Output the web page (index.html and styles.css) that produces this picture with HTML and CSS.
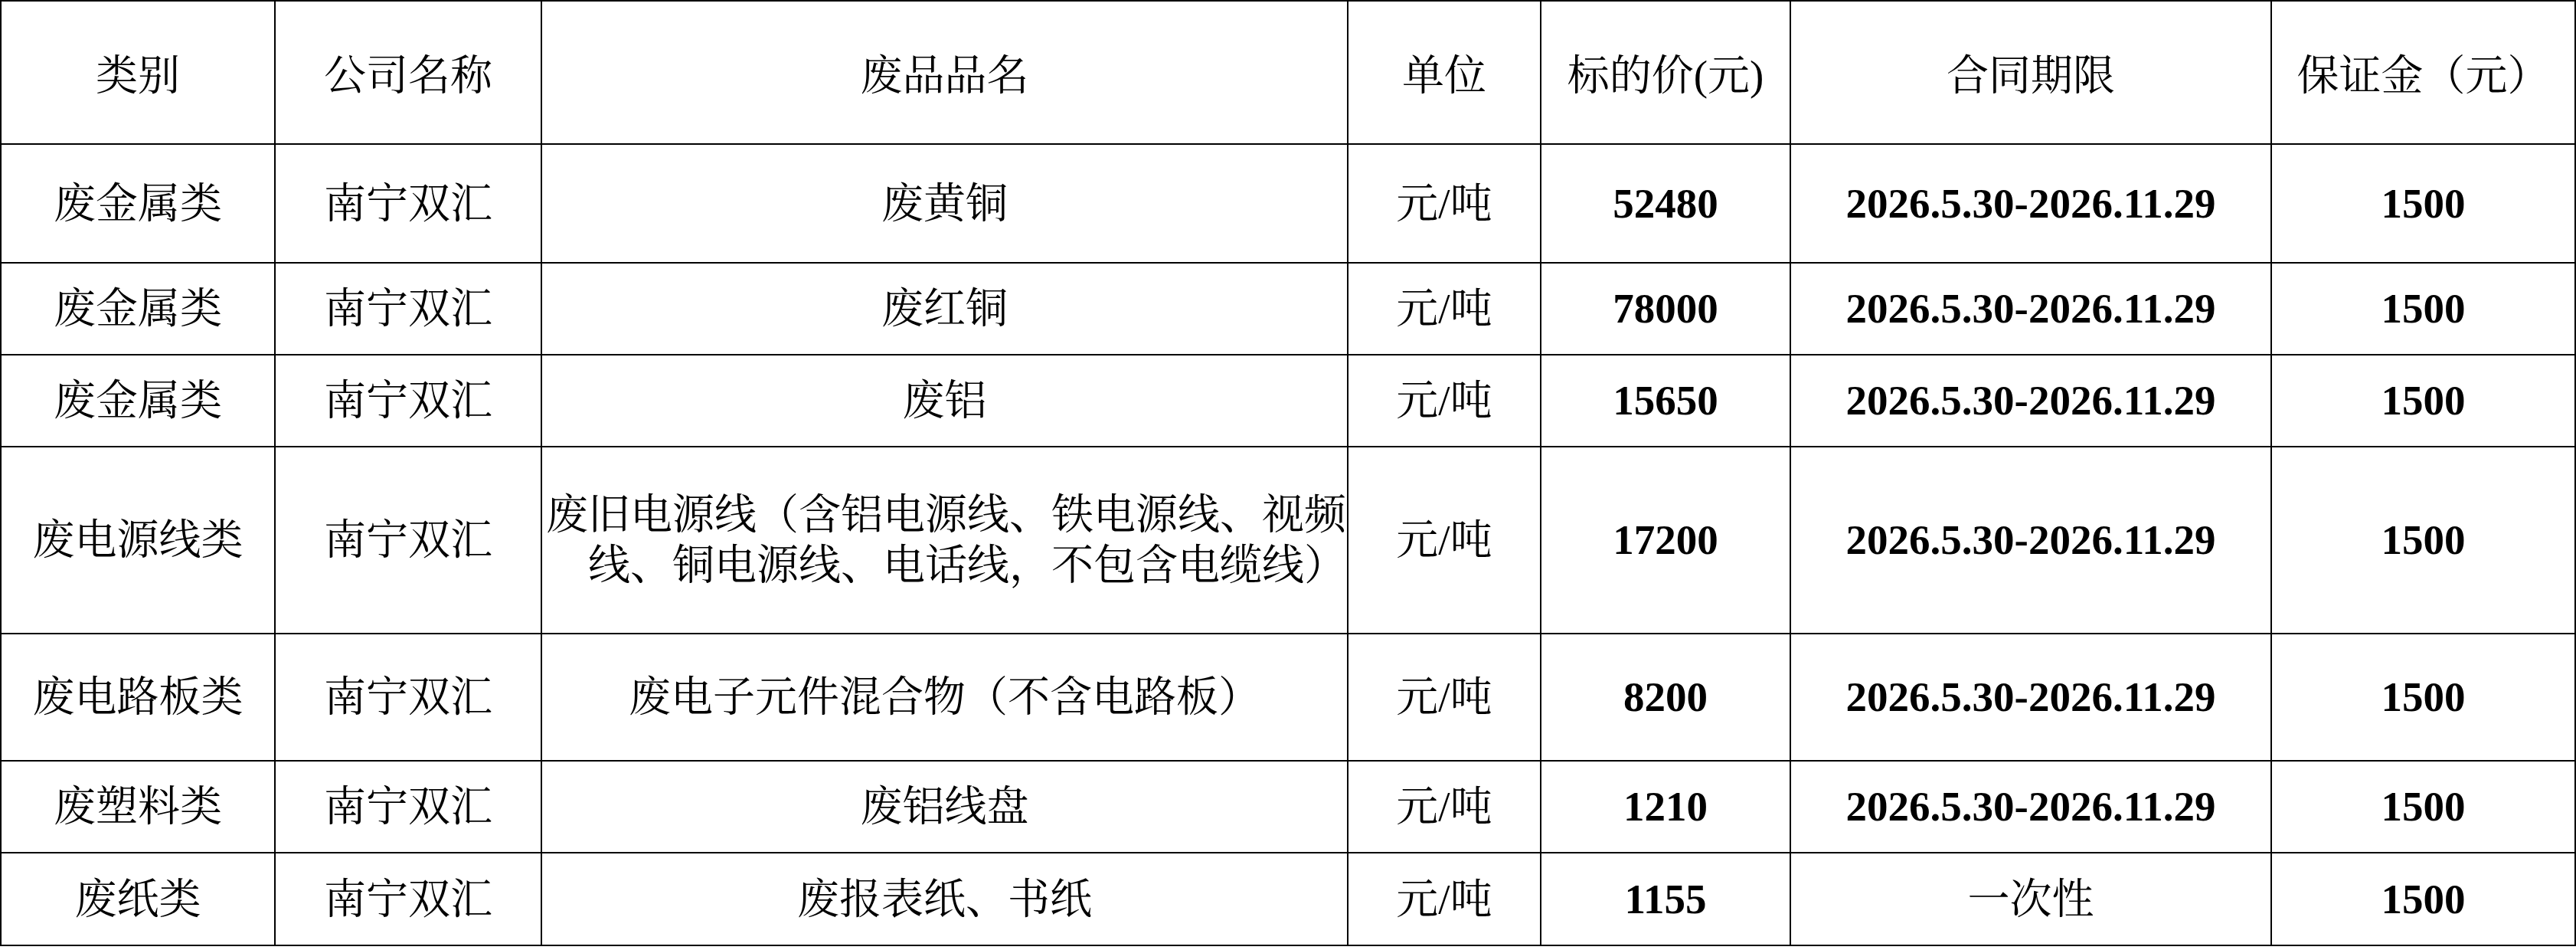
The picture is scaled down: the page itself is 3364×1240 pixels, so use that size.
FILE: index.html
```html
<!DOCTYPE html>
<html lang="zh-CN">
<head>
<meta charset="utf-8">
<title>废品价格表</title>
<link rel="stylesheet" href="styles.css">
</head>
<body>
<table class="price-table">
  <colgroup>
    <col class="c-cat">
    <col class="c-co">
    <col class="c-name">
    <col class="c-unit">
    <col class="c-price">
    <col class="c-term">
    <col class="c-dep">
  </colgroup>
  <thead>
    <tr class="r-head">
      <th>类别</th>
      <th>公司名称</th>
      <th>废品品名</th>
      <th>单位</th>
      <th>标的价(元)</th>
      <th>合同期限</th>
      <th>保证金（元）</th>
    </tr>
  </thead>
  <tbody>
    <tr class="r-first">
      <td>废金属类</td>
      <td>南宁双汇</td>
      <td>废黄铜</td>
      <td>元/吨</td>
      <td class="num">52480</td>
      <td class="num">2026.5.30-2026.11.29</td>
      <td class="num">1500</td>
    </tr>
    <tr class="r-std">
      <td>废金属类</td>
      <td>南宁双汇</td>
      <td>废红铜</td>
      <td>元/吨</td>
      <td class="num">78000</td>
      <td class="num">2026.5.30-2026.11.29</td>
      <td class="num">1500</td>
    </tr>
    <tr class="r-std">
      <td>废金属类</td>
      <td>南宁双汇</td>
      <td>废铝</td>
      <td>元/吨</td>
      <td class="num">15650</td>
      <td class="num">2026.5.30-2026.11.29</td>
      <td class="num">1500</td>
    </tr>
    <tr class="r-tall">
      <td>废电源线类</td>
      <td>南宁双汇</td>
      <td class="wrap">废旧电源线（含铝电源线、铁电源线、视频<br>线、铜电源线、电话线，不包含电缆线）</td>
      <td>元/吨</td>
      <td class="num">17200</td>
      <td class="num">2026.5.30-2026.11.29</td>
      <td class="num">1500</td>
    </tr>
    <tr class="r-mid">
      <td>废电路板类</td>
      <td>南宁双汇</td>
      <td>废电子元件混合物（不含电路板）</td>
      <td>元/吨</td>
      <td class="num">8200</td>
      <td class="num">2026.5.30-2026.11.29</td>
      <td class="num">1500</td>
    </tr>
    <tr class="r-std">
      <td>废塑料类</td>
      <td>南宁双汇</td>
      <td>废铝线盘</td>
      <td>元/吨</td>
      <td class="num">1210</td>
      <td class="num">2026.5.30-2026.11.29</td>
      <td class="num">1500</td>
    </tr>
    <tr class="r-last">
      <td>废纸类</td>
      <td>南宁双汇</td>
      <td>废报表纸、书纸</td>
      <td>元/吨</td>
      <td class="num">1155</td>
      <td>一次性</td>
      <td class="num">1500</td>
    </tr>
  </tbody>
</table>
</body>
</html>
```

FILE: styles.css
```css
html, body {
  margin: 0;
  padding: 0;
  background: #ffffff;
}

.price-table {
  border-collapse: collapse;
  table-layout: fixed;
  width: 3362px;
  margin: 0;
  font-family: "Liberation Serif", "Noto Serif CJK SC", "Noto Sans CJK SC", serif;
  font-size: 55px;
  color: #000000;
}

.price-table th,
.price-table td {
  border: 2px solid #000000;
  padding: 0;
  text-align: center;
  vertical-align: middle;
  font-weight: normal;
  line-height: 1.2;
  white-space: nowrap;
  overflow: hidden;
}

.price-table td.num {
  font-weight: bold;
}

.price-table td.wrap {
  text-align: right;
  padding-right: 1px;
}

.c-cat { width: 358px; }
.c-co { width: 348px; }
.c-name { width: 1053px; }
.c-unit { width: 252px; }
.c-price { width: 326px; }
.c-term { width: 628px; }
.c-dep { width: 397px; }

.r-head { height: 187px; }
.r-head th { padding-top: 8px; }
.r-first { height: 155px; }
.r-std { height: 120px; }
.r-tall { height: 244px; }
.r-mid { height: 166px; }
.r-last { height: 121px; }
```
